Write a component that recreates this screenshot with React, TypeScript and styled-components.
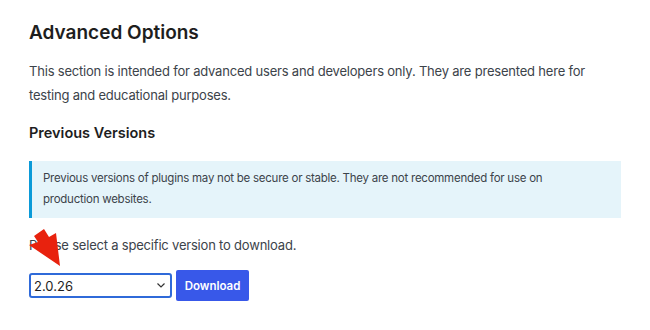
import styled, { createGlobalStyle } from "styled-components";

const GlobalStyle = createGlobalStyle`
  body {
    margin: 0;
    background: #ffffff;
    font-family: Inter, "Noto Sans", "Liberation Sans", sans-serif;
    color: #1e1e1e;
  }
`;

const Page = styled.main`
  position: relative;
  padding: 20px 29px 0 29px;
  width: 650px;
  box-sizing: border-box;
`;

const Title = styled.h2`
  margin: 0;
  font-size: 19px;
  line-height: 26px;
  font-weight: 600;
  color: #1e1e1e;
`;

const Intro = styled.p`
  margin: 13px 0 0;
  font-size: 13px;
  letter-spacing: -0.2px;
  line-height: 24px;
  color: #3c434a;
`;

const SubTitle = styled.h3`
  margin: 15px 0 0;
  font-size: 14.5px;
  line-height: 22px;
  font-weight: 600;
  color: #1e1e1e;
`;

const Notice = styled.div`
  margin-top: 17px;
  padding: 7px 70px 8px 11px;
  border-left: 3px solid #0b9ad8;
  background: #e5f4fa;
  font-size: 11.5px;
  letter-spacing: -0.25px;
  line-height: 21px;
  color: #3c434a;
`;

const Prompt = styled.p`
  margin: 15px 0 0;
  font-size: 13px;
  letter-spacing: -0.2px;
  line-height: 24px;
  color: #3c434a;
`;

const Row = styled.div`
  margin-top: 13px;
  display: flex;
  align-items: center;
  gap: 4px;
`;

const SelectWrap = styled.div`
  position: relative;
  width: 143px;
  height: 25px;
`;

const VersionSelect = styled.select`
  appearance: none;
  width: 100%;
  height: 100%;
  box-sizing: border-box;
  border: 2px solid #2f6ad9;
  border-radius: 3px;
  padding: 0 20px 0 3px;
  font-family: Inter, "Noto Sans", sans-serif;
  font-size: 13px;
  color: #1e1e1e;
  background: #fff;
  outline: none;
`;

const Chevron = styled.svg`
  position: absolute;
  right: 7px;
  top: 10px;
  width: 8px;
  height: 5px;
  pointer-events: none;
`;

const DownloadButton = styled.button`
  width: 73px;
  height: 31px;
  border: none;
  border-radius: 2px;
  background: #3858e9;
  color: #ffffff;
  font-family: Inter, "Noto Sans", sans-serif;
  font-size: 11.5px;
  font-weight: 600;
  cursor: pointer;
`;

const Arrow = styled.svg`
  position: absolute;
  left: 25px;
  top: 222px;
  width: 50px;
  height: 50px;
  pointer-events: none;
`;

const App = () => {
  return (
    <>
      <GlobalStyle />
      <Page>
        <Title>Advanced Options</Title>
        <Intro>
          This section is intended for advanced users and developers only. They are presented here for
          testing and educational purposes.
        </Intro>
        <SubTitle>Previous Versions</SubTitle>
        <Notice>
          Previous versions of plugins may not be secure or stable. They are not recommended for use on
          production websites.
        </Notice>
        <Prompt>Please select a specific version to download.</Prompt>
        <Row>
          <SelectWrap>
            <VersionSelect defaultValue="2.0.26">
              <option value="2.0.26">2.0.26</option>
            </VersionSelect>
            <Chevron viewBox="0 0 8 5">
              <path d="M0.5 0.5 L4 4 L7.5 0.5" fill="none" stroke="#333" strokeWidth="1.2" />
            </Chevron>
          </SelectWrap>
          <DownloadButton>Download</DownloadButton>
        </Row>
        <Arrow viewBox="0 0 50 50">
          <polygon points="9,14 19,7 24,15 31,11 35,44 4,23 13,20" fill="#e8220e" />
        </Arrow>
      </Page>
    </>
  );
};

export default App;
